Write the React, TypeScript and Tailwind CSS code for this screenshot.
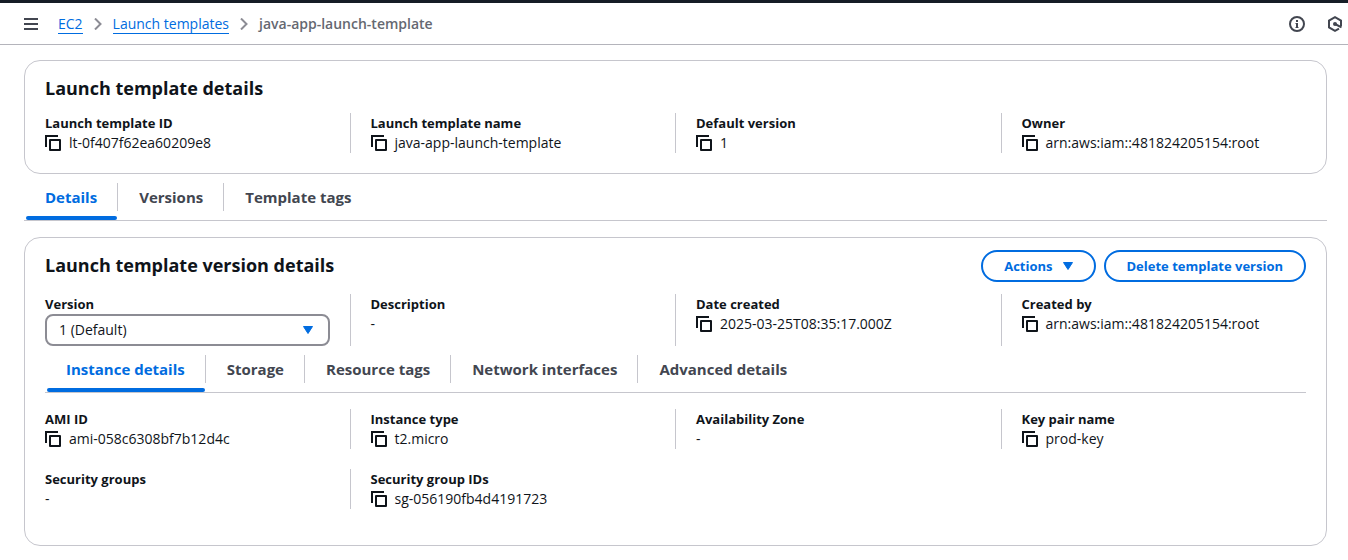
import type { ReactNode } from 'react';

function CopyIcon() {
  return (
    <svg viewBox="0 0 16 16" className="size-4" fill="none" stroke="currentColor" strokeWidth="2" aria-hidden="true">
      <path d="M1 12V1h12" />
      <path d="M5 5h10v10H5z" strokeLinejoin="round" />
    </svg>
  );
}

function Caret() {
  return (
    <svg viewBox="0 0 10 8" className="h-2 w-[10px]" fill="#006ce0" stroke="#006ce0" strokeLinejoin="round" aria-hidden="true">
      <path d="M.5.5h9L5 7.5z" />
    </svg>
  );
}

function Chevron() {
  return (
    <svg viewBox="0 0 8 12" className="h-3 w-2" fill="none" stroke="#8c8c94" strokeWidth="2" aria-hidden="true">
      <path d="M1 .5 6.5 6 1 11.5" />
    </svg>
  );
}

function Columns({ children }: { children: ReactNode }) {
  return <div className="-ml-[21px] grid grid-cols-4 gap-x-5 gap-y-5">{children}</div>;
}

function Cell({ first, children }: { first?: boolean; children: ReactNode }) {
  return <div className={first ? 'min-w-0 border-l border-transparent pl-5' : 'min-w-0 border-l border-[#c6c6cd] pl-5'}>{children}</div>;
}

function Field({ label, value, copy, first }: { label: string; value: string; copy?: boolean; first?: boolean }) {
  return (
    <Cell first={first}>
      <dl>
        <dt className="text-[13px] leading-5 font-bold">{label}</dt>
        <dd className="flex items-center gap-2">
          {copy && (
            <button type="button" aria-label={`Copy ${label}`}>
              <CopyIcon />
            </button>
          )}
          <span>{value}</span>
        </dd>
      </dl>
    </Cell>
  );
}

function Tabs({ items, label }: { items: string[]; label: string }) {
  return (
    <div role="tablist" aria-label={label} className="flex border-b border-[#c6c6cd] text-[15px] font-bold text-[#424650]">
      {items.map((item, i) => (
        <button
          key={item}
          type="button"
          role="tab"
          aria-selected={i === 0}
          className={i === 0 ? 'flex flex-col pl-px text-[#006ce0]' : 'flex flex-col'}
        >
          <span
            className={
              i === 0
                ? 'border-r border-[#c6c6cd] px-5 pt-0.5 pb-0.5 leading-6'
                : i < items.length - 1
                  ? 'border-r border-[#c6c6cd] pt-0.5 pr-5 pb-0.5 pl-[21px] leading-6'
                  : 'pt-0.5 pr-5 pb-0.5 pl-[21px] leading-6'
            }
          >
            {item}
          </span>
          <span className={i === 0 ? 'mt-[5px] mr-px ml-px h-1 self-stretch rounded-sm bg-[#006ce0]' : 'mt-[5px] h-1'} />
        </button>
      ))}
    </div>
  );
}

export default function App() {
  return (
    <div className="bg-white font-['Open_Sans','Noto_Sans',sans-serif] text-sm leading-5 text-[#0f141a]">
      <div className="h-[3px] bg-[#161d26]" />
      <header className="flex h-[42px] items-center border-b border-[#b4b4bb] pl-6">
        <button type="button" aria-label="Open navigation" className="mr-5 text-[#424650]">
          <svg viewBox="0 0 14 12" className="h-3 w-[14px]" stroke="currentColor" strokeWidth="2" aria-hidden="true">
            <path d="M0 1h14M0 6h14M0 11h14" />
          </svg>
        </button>
        <nav aria-label="Breadcrumb" className="flex items-center gap-[11px]">
          <a href="#ec2" className="border-b border-[#006ce0] pt-0.5 leading-[18px] text-[#006ce0]">EC2</a>
          <Chevron />
          <a href="#templates" className="border-b border-[#006ce0] pt-0.5 leading-[18px] text-[#006ce0]">Launch templates</a>
          <Chevron />
          <span className="font-semibold text-[#656871]">java-app-launch-template</span>
        </nav>
        <div className="mr-[5px] ml-auto flex items-center gap-[22px] text-[#424650]">
          <button type="button" aria-label="Info">
            <svg viewBox="0 0 16 16" className="size-4" fill="none" stroke="currentColor" strokeWidth="2" aria-hidden="true">
              <circle cx="8" cy="8" r="7" />
              <path d="M8 4v2M8 7v5" />
              <path d="M6.5 7.5H8M6.5 11.5h3" strokeWidth="1" />
            </svg>
          </button>
          <button type="button" aria-label="Diagnostics">
            <svg viewBox="0 0 16 16" className="size-4" fill="none" stroke="currentColor" strokeWidth="2" aria-hidden="true">
              <path d="M14 10V4.6L8 1.2 2 4.6v6.8l6 3.400 4-2.200" />
              <path d="m8 8 6.500 3.400" />
              <circle cx="8" cy="8" r="2" fill="currentColor" stroke="none" />
            </svg>
          </button>
        </div>
      </header>

      <main className="pt-[15px] pr-[21px] pb-[14px] pl-6">
        <section className="rounded-2xl border border-[#c6c6cd] px-5 pt-[15px] pb-5">
          <h2 className="mb-[11px] pb-0.5 text-lg leading-6 font-bold">Launch template details</h2>
          <Columns>
            <Field first copy label="Launch template ID" value="lt-0f407f62ea60209e8" />
            <Field copy label="Launch template name" value="java-app-launch-template" />
            <Field copy label="Default version" value="1" />
            <Field copy label="Owner" value="arn:aws:iam::481824205154:root" />
          </Columns>
        </section>

        <div className="mt-[9px] mb-4">
          <Tabs label="Template sections" items={['Details', 'Versions', 'Template tags']} />
        </div>

        <section className="rounded-2xl border border-[#c6c6cd] px-5 pt-3 pb-9">
          <div className="mb-3 flex items-center justify-between">
            <h2 className="pb-0.5 text-lg leading-6 font-bold">Launch template version details</h2>
            <div className="flex gap-2 text-[13px] font-bold text-[#006ce0]">
              <button type="button" className="flex h-8 items-center gap-[10px] rounded-full border-2 border-[#006ce0] px-[21px]">
                Actions
                <Caret />
              </button>
              <button type="button" className="h-8 rounded-full border-2 border-[#006ce0] px-[21px]">Delete template version</button>
            </div>
          </div>
          <Columns>
            <Cell first>
              <label htmlFor="version" className="block text-[13px] leading-5 font-bold">Version</label>
              <div className="grid items-center">
                <select
                  id="version"
                  className="col-start-1 row-start-1 h-8 w-full appearance-none rounded-lg border-2 border-[#8c8c94] bg-white pl-3"
                >
                  <option>1 (Default)</option>
                </select>
                <span className="pointer-events-none col-start-1 row-start-1 mr-[17px] justify-self-end">
                  <Caret />
                </span>
              </div>
            </Cell>
            <Field label="Description" value="-" />
            <Field copy label="Date created" value="2025-03-25T08:35:17.000Z" />
            <Field copy label="Created by" value="arn:aws:iam::481824205154:root" />
          </Columns>
          <div className="mt-[9px] mb-4">
            <Tabs
              label="Version sections"
              items={['Instance details', 'Storage', 'Resource tags', 'Network interfaces', 'Advanced details']}
            />
          </div>
          <Columns>
            <Field first copy label="AMI ID" value="ami-058c6308bf7b12d4c" />
            <Field copy label="Instance type" value="t2.micro" />
            <Field label="Availability Zone" value="-" />
            <Field copy label="Key pair name" value="prod-key" />
            <Field first label="Security groups" value="-" />
            <Field copy label="Security group IDs" value="sg-056190fb4d4191723" />
          </Columns>
        </section>
      </main>
    </div>
  );
}
